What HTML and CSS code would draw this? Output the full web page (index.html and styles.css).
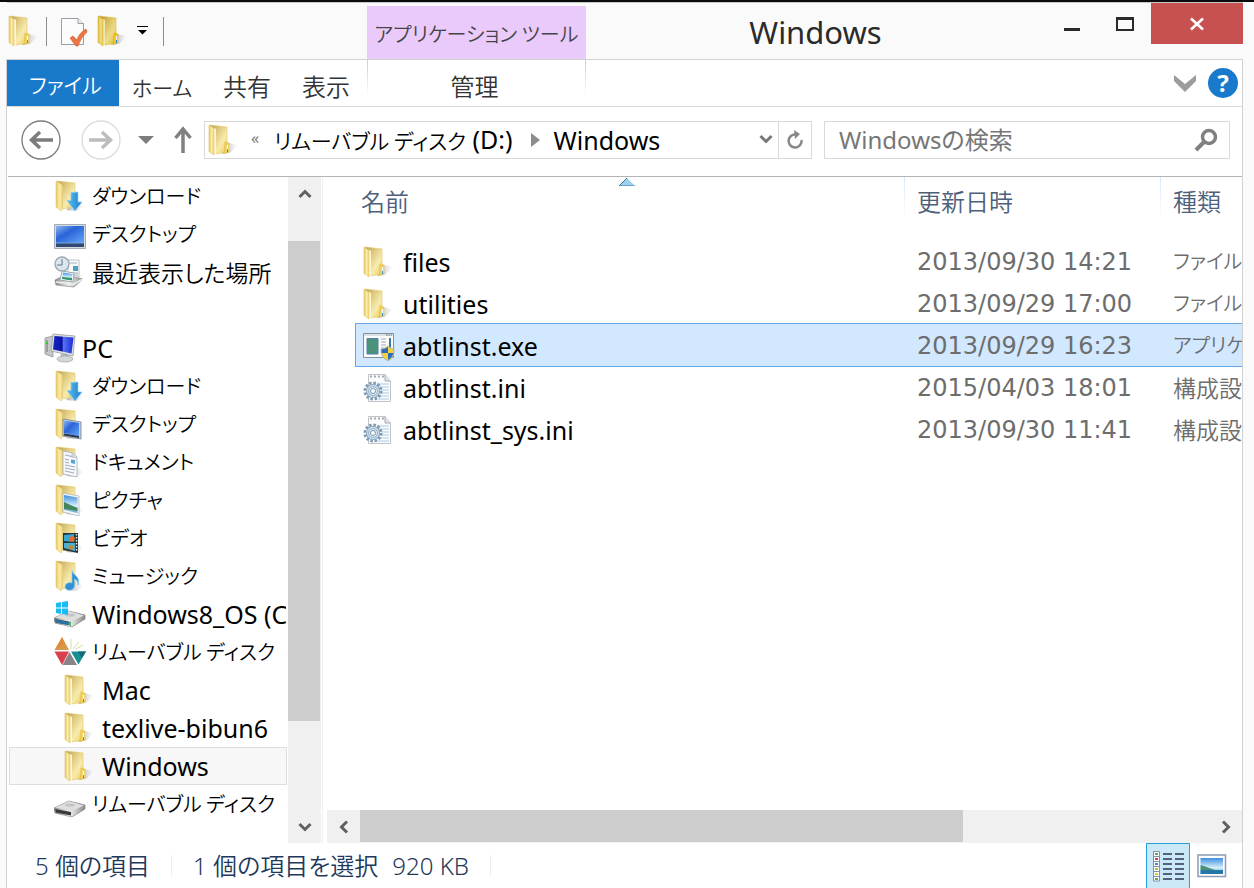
FILE: index.html
```html
<!DOCTYPE html>
<html lang="ja">
<head>
<meta charset="utf-8">
<title>Windows</title>
<link rel="stylesheet" href="styles.css">
</head>
<body>
<svg class="defs" width="0" height="0" aria-hidden="true">
  <defs>
    <linearGradient id="gBack" x1="0" x2="1" y1="0" y2="1"><stop offset="0" stop-color="#b89f58"/><stop offset=".35" stop-color="#e0cb80"/><stop offset=".65" stop-color="#f8ebae"/><stop offset="1" stop-color="#ebcb50"/></linearGradient>
    <linearGradient id="gFlap" x1="0" x2="1"><stop offset="0" stop-color="#e6c663"/><stop offset=".5" stop-color="#f9eaa4"/><stop offset="1" stop-color="#f1d87c"/></linearGradient>
    <linearGradient id="gShade" x1="0" x2="1"><stop offset="0" stop-color="#777" stop-opacity=".55"/><stop offset="1" stop-color="#999" stop-opacity="0"/></linearGradient>
    <linearGradient id="gBlue" x1="0" x2="1" y1="0" y2="1"><stop offset="0" stop-color="#8bb6ee"/><stop offset=".4" stop-color="#2a63d8"/><stop offset="1" stop-color="#63a6f7"/></linearGradient>
    <linearGradient id="gArrow" x1="0" x2="1"><stop offset="0" stop-color="#5bbdf2"/><stop offset="1" stop-color="#1c7fca"/></linearGradient>
    <linearGradient id="gSky" x1="0" x2="0" y1="0" y2="1"><stop offset="0" stop-color="#3d8fe0"/><stop offset=".6" stop-color="#d6eefa"/><stop offset="1" stop-color="#5aa7cf"/></linearGradient>
    <linearGradient id="gDisk" x1="0" x2="1"><stop offset="0" stop-color="#8d8d8d"/><stop offset=".5" stop-color="#f2f2f2"/><stop offset="1" stop-color="#8a8a8a"/></linearGradient>
    <linearGradient id="gPc" x1="0" x2="1"><stop offset="0" stop-color="#1424c4"/><stop offset=".45" stop-color="#0a14a0"/><stop offset=".5" stop-color="#5a73f0"/><stop offset="1" stop-color="#1a2ad8"/></linearGradient>
    <symbol id="folder" viewBox="0 0 32 32">
      <path d="M20 19L30 21L22 29L14 30Z" fill="url(#gShade)"/>
      <path d="M2 1L19 3V28L8 30Z" fill="url(#gBack)" stroke="#e2c766" stroke-width=".6"/>
      <path d="M17 18L21 19V28L16 29.500Z" fill="#f0d058" stroke="#dcb840" stroke-width=".5"/>
      <path d="M19.500 21V27" stroke="#fff" stroke-width="1.400"/><path d="M19.500 25V28" stroke="#3f8fd8"/>
      <path d="M6 4L8 5V29L6 30Z" fill="#fff8d6"/>
      <path d="M1 1L6 4.500V31L1 27.500Z" fill="url(#gFlap)" stroke="#e0c262" stroke-width=".6"/>
    </symbol>
    <symbol id="sfolder" viewBox="0 0 32 32">
      <path d="M22 20L30 27L22 31L12 30Z" fill="url(#gShade)"/>
      <path d="M3 1L21 3V26L9 29Z" fill="url(#gBack)" stroke="#e2c766" stroke-width=".6"/>
      <path d="M2 1L8.500 5V28L7 31L2 27Z" fill="url(#gFlap)" stroke="#dfc67a" stroke-width=".6"/>
    </symbol>
    <symbol id="dlfolder" viewBox="0 0 32 32"><use href="#sfolder"/><path d="M17 12.500L24 12V22H28L21 31L13 20.500H17Z" fill="url(#gArrow)" stroke="#8dcdf2" stroke-width=".7"/></symbol>
    <symbol id="deskfolder" viewBox="0 0 32 32"><use href="#sfolder"/><path d="M9 11L27 14V31L9 28Z" fill="#bcd0ea" stroke="#777e88" stroke-width=".8"/><path d="M10 12.500L25 15V28L10 25Z" fill="url(#gBlue)"/><path d="M10 25.500L25 28V30L10 27.500Z" fill="#25334c"/></symbol>
    <symbol id="docfolder" viewBox="0 0 32 32"><use href="#sfolder"/><path d="M9 5L19 7L23 11V31L9 28Z" fill="#f6f8fc" stroke="#a8adb6" stroke-width=".8"/><path d="M11 9L18 10.500M11 13L15 14M11 16L15 17M11 19L21 21M11 22L21 24M11 25L20 27" stroke="#8995a8" stroke-width=".8"/><path d="M17 13.500L21 14V18L17 17Z" fill="#58a5ce"/><path d="M18 7V11L23 12" fill="#d5dbe4" stroke="#999" stroke-width=".5"/></symbol>
    <symbol id="picfolder" viewBox="0 0 32 32"><use href="#sfolder"/><path d="M9 9L25 12V32L9 28Z" fill="#f4f6f9" stroke="#aab0b8" stroke-width=".7"/><path d="M10 11L23.500 13.500V29L10 26Z" fill="url(#gSky)"/><path d="M10 18Q16 21 23.500 24V27L10 25Z" fill="#43865d"/></symbol>
    <symbol id="vidfolder" viewBox="0 0 32 32"><use href="#sfolder"/><path d="M9 11L24 11V31L9 28Z" fill="#26363b"/><path d="M10 13L20 12V20L10 19Z" fill="#39a5d0"/><circle cx="18" cy="17" r="2.800" fill="#e16d28"/><path d="M10 21L21 21V29L10 26Z" fill="#48b2d5"/><path d="M14 26Q16 20 20 25L18 28Z" fill="#c48b30"/><path d="M22.500 12V30" stroke="#e6e6e6" stroke-width="1.500" stroke-dasharray="1.500 1.500"/></symbol>
    <symbol id="musfolder" viewBox="0 0 32 32"><use href="#sfolder"/><path d="M18 10C19 16 27 16 24 25C24 20 22 20 20.500 19V26C20 31 12 32 11 27C11 23 15 22 18 23Z" fill="#328fd3" stroke="#8ac9ee" stroke-width=".7"/></symbol>
    <symbol id="desktop" viewBox="0 0 32 32"><path d="M.5 6.500H31.500V30.500H.5Z" fill="#d4dae2" stroke="#a4acb8"/><path d="M2 8H30V25H2Z" fill="url(#gBlue)"/><path d="M2 25H30V29H2Z" fill="#314870"/><path d="M2 25H30" stroke="#7da6df"/></symbol>
    <symbol id="recent" viewBox="0 0 32 32"><path d="M1 24L11 19L29 23L20 31L2 29Z" fill="url(#gDisk)" stroke="#777" stroke-width=".6"/><path d="M2 26L20 28L29 23" fill="none" stroke="#eee" stroke-width="1.500"/><path d="M14 4H25V21H14Z" fill="#f8fafc" stroke="#a1a8b0" stroke-width=".7"/><path d="M15 7H23M15 17H24M15 19H24" stroke="#8d99a9" stroke-width=".8"/><path d="M19 10H24V15H19Z" fill="#4aa3bd"/><circle cx="8" cy="8" r="7" fill="#dce6ef" stroke="#9aa7b1" stroke-width="1.300"/><path d="M8 3V9H3" fill="none" stroke="#61788a"/><path d="M8 15L20 17L19 26L6 24Z" fill="#fff" stroke="#9aa"/><path d="M9 16.500L18.500 18L18 24L8 22.500Z" fill="url(#gSky)"/><path d="M8 21L18 22V24.500L8 23Z" fill="#31966b"/></symbol>
    <symbol id="pc" viewBox="0 0 32 32"><path d="M1 6L9 4V25L1 22Z" fill="#c5c8c9" stroke="#888" stroke-width=".7"/><path d="M3 8V20" stroke="#777"/><path d="M2 11H4" stroke="#2ece20" stroke-width="2"/><path d="M17 22H24L26 28H16Z" fill="#b8bcc0"/><ellipse cx="21" cy="27" rx="8" ry="3" fill="#d5d8db" stroke="#9a9fa4" stroke-width=".7"/><path d="M9 2L31 4L29 24L7 19Z" fill="#dde0e4" stroke="#8d929a" stroke-width=".7"/><path d="M10.500 4L29.500 5.500L27.500 21.500L9 17.500Z" fill="url(#gPc)"/></symbol>
    <symbol id="disk" viewBox="0 0 32 32"><path d="M0 20L15 13L31 17V21L18 29L1 25Z" fill="url(#gDisk)" stroke="#777" stroke-width=".6"/><path d="M1 19.500L15 13.500L30 17.500L18 23Z" fill="#dedede"/><ellipse cx="16" cy="17" rx="5" ry="1.500" fill="#c4c4c4"/><path d="M1 21L17 24V27.500L2 24.500Z" fill="#3a3a3a"/></symbol>
    <symbol id="osdisk" viewBox="0 0 32 32"><use href="#disk"/><path d="M2 21.500L17 24.500V27.500L2 24.500Z" fill="#2775a8"/><path d="M16 24.500V27" stroke="#43d940" stroke-width="2"/><path d="M2 5L7 4V9.500H2ZM8 4L14 3V9.500H8ZM2 10.500H7V16L2 15ZM8 10.500H14V17L8 16Z" fill="#19bcf2"/></symbol>
    <symbol id="gems" viewBox="0 0 32 32"><path d="M8 1L15 14H.5Z" fill="#d6994b"/><path d="M8 1L11 7L1 14Z" fill="#e4822d" opacity=".6"/><path d="M.5 15.500H15L8 29Z" fill="#d93f4d"/><path d="M15.500 16L23 29H8.500Z" fill="#8b8385"/><path d="M17 15.500H32L24.500 28.500Z" fill="#168f92"/><path d="M24 15.500H32L28 22Z" fill="#176a79"/><path d="M17 13L17 3M19 13L25 6M21 13.500L29 9" stroke="#cfe0a0" stroke-width="1"/></symbol>
    <symbol id="exe" viewBox="0 0 32 32"><path d="M.5 3.500H30.500V27.500H.5Z" fill="#fbfbfb" stroke="#858f99"/><path d="M1 4H30V6H1Z" fill="#d9e1e9"/><path d="M23 5H29" stroke="#596678" stroke-dasharray="1.500 1"/><path d="M4 8.500H15V24H4Z" fill="#49937a" stroke="#5180b0"/><path d="M18 9H23M18 12H23M18 15H23M18 18H22" stroke="#aaa"/><path d="M26 8H28V19H26Z" fill="#3d76a8"/><path d="M18 19Q22 19 25 16Q28 19 31 19Q32 27 25 31Q18 28 18 19Z" fill="#f4d23d" stroke="#9cacbb" stroke-width=".8"/><path d="M25 17V23H18.500V19.500Q22 19 25 17ZM25 23H30.500Q29 28 25 30Z" fill="#2e6cb9"/></symbol>
    <symbol id="ini" viewBox="0 0 32 32"><path d="M5.500 2.500H22L27.500 9V29.500H5.500Z" fill="#fafbfc" stroke="#c0c4c9"/><path d="M22 2.500V9H27.500" fill="#e1e4e8" stroke="#a5aab0"/><path d="M7 4.500H21" stroke="#a3a9af" stroke-width="2" stroke-dasharray="2 2"/><path d="M14 12H26M16 15H26M18 18H26M18 21H26M17 24H26M15 27H26" stroke="#a9cbe2"/><circle cx="10" cy="19" r="8" fill="none" stroke="#7d99b2" stroke-width="3" stroke-dasharray="2.500 1.700"/><circle cx="10" cy="19" r="5.500" fill="#dce9f3" stroke="#7895ae" stroke-width="3"/><circle cx="10" cy="19" r="5.500" fill="none" stroke="#c2d8e8" stroke-width="1.800"/><circle cx="10" cy="19" r="2.500" fill="#fff" stroke="#7895ae"/></symbol>
  </defs>
</svg>

<div class="window">
  <header class="titlebar">
    <div class="quick">
      <svg class="icon"><use href="#folder"/></svg>
      <span class="rule"></span>
      <button class="plain" aria-label="プロパティ"><svg class="icon" viewBox="0 0 32 32"><path d="M3.500 3.500H20L25.500 9V29.500H3.500Z" fill="#fcfcfd" stroke="#999ea6"/><path d="M20 3.500V8.500H25.500" fill="#e9ecf0" stroke="#999ea6"/><path d="M12 23L15 21L19 25Q21 18 28 14L29 17Q23 22 20 31H18Z" fill="#ee7440" stroke="#d95f30" stroke-width=".7"/></svg></button>
      <button class="plain newfolder" aria-label="新しいフォルダー"><svg class="icon strong"><use href="#folder"/></svg></button>
      <button class="plain more" aria-label="カスタマイズ"><svg width="12" height="12" viewBox="0 0 12 12"><path d="M0 1.500H11" stroke="#000"/><path d="M1 5H10L5.500 9.500Z"/></svg></button>
      <span class="rule"></span>
    </div>
    <div class="context kana">アプリケーション ツール</div>
    <h1 class="title">Windows</h1>
    <div class="controls">
      <button class="ctl" aria-label="最小化"><svg width="18" height="14" viewBox="0 0 18 14"><path d="M1 12.500H17" stroke="#2a2a2a" stroke-width="3"/></svg></button>
      <button class="ctl" aria-label="最大化"><svg width="18" height="14" viewBox="0 0 18 14"><path d="M1 1.500H17V13H1Z" fill="none" stroke="#2a2a2a" stroke-width="2"/><path d="M0 1.500H18" stroke="#2a2a2a" stroke-width="3"/></svg></button>
      <button class="ctl close" aria-label="閉じる"><svg width="14" height="14" viewBox="0 0 14 14"><path d="M1 1.500L13 12.500M13 1.500L1 12.500" stroke="#fff" stroke-width="2.500"/></svg></button>
    </div>
  </header>

  <div class="client">
    <nav class="tabs">
      <div class="tabgroup">
        <button class="tab file kana">ファイル</button>
        <button class="tab kana">ホーム</button>
        <button class="tab">共有</button>
        <button class="tab">表示</button>
      </div>
      <button class="tab manage">管理</button>
      <div class="tabtools">
        <button class="plain" aria-label="リボンの展開"><svg width="24" height="20" viewBox="0 0 24 20"><path d="M1 2L12 11L23 2V8L12 19L1 8Z" fill="#9c9c9c"/></svg></button>
        <button class="help" aria-label="ヘルプ">?</button>
      </div>
    </nav>

    <div class="navrow">
      <button class="round" aria-label="戻る"><svg width="40" height="40" viewBox="0 0 40 40"><circle cx="20" cy="20" r="19" fill="#fff" stroke="#7c7c7c" stroke-width="1.300"/><path d="M32 20H11M19 12L10.500 20L19 28" fill="none" stroke="#7c7c7c" stroke-width="3.500"/></svg></button>
      <button class="round" aria-label="進む"><svg width="40" height="40" viewBox="0 0 40 40"><circle cx="20" cy="20" r="19" fill="#fff" stroke="#dcdcdc" stroke-width="1.300"/><path d="M8 20H29M21 12L29.500 20L21 28" fill="none" stroke="#bcbcbc" stroke-width="3.500"/></svg></button>
      <button class="plain hist" aria-label="履歴"><svg width="16" height="10" viewBox="0 0 16 10"><path d="M0 1H16L8 9Z" fill="#7c7c7c"/></svg></button>
      <button class="plain" aria-label="上へ"><svg width="18" height="28" viewBox="0 0 18 28"><path d="M9 27V4M1.500 12L9 3L16.500 12" fill="none" stroke="#808080" stroke-width="3.500"/></svg></button>
      <div class="address">
        <svg class="icon"><use href="#folder"/></svg>
        <button class="plain chev">«</button>
        <button class="crumb"><span class="kana">リムーバブル ディスク</span> (D:)</button>
        <svg class="sep" width="9" height="14" viewBox="0 0 9 14"><path d="M0 0L9 7L0 14Z" fill="#8c8c8c"/></svg>
        <button class="crumb">Windows</button>
        <button class="plain drop" aria-label="履歴の一覧"><svg width="14" height="11" viewBox="0 0 14 11"><path d="M1.500 2L7 7.500L12.500 2" fill="none" stroke="#777" stroke-width="3"/></svg></button>
        <button class="plain refresh" aria-label="更新"><svg width="18" height="20" viewBox="0 0 18 20"><path d="M9.500 4.500A6.500 6.500 0 1 0 15.500 10" fill="none" stroke="#888" stroke-width="2.500"/><path d="M8 0L14 4L9 9Z" fill="#888"/></svg></button>
      </div>
      <div class="search">
        <input type="search" aria-label="Windowsの検索" placeholder="Windowsの検索">
        <svg width="24" height="24" viewBox="0 0 24 24"><circle cx="15" cy="9" r="6.500" fill="none" stroke="#808080" stroke-width="3.500"/><path d="M10.500 13.500L2 22" stroke="#808080" stroke-width="4"/></svg>
      </div>
    </div>

    <main class="body">
      <aside class="side">
        <ul class="tree">
          <li><button class="node kana"><svg class="icon"><use href="#dlfolder"/></svg>ダウンロード</button></li>
          <li><button class="node kana"><svg class="icon"><use href="#desktop"/></svg>デスクトップ</button></li>
          <li><button class="node kanji"><svg class="icon"><use href="#recent"/></svg>最近表示した場所</button></li>
          <li class="root"><button class="node"><svg class="icon"><use href="#pc"/></svg>PC</button></li>
          <li><button class="node kana"><svg class="icon"><use href="#dlfolder"/></svg>ダウンロード</button></li>
          <li><button class="node kana"><svg class="icon"><use href="#deskfolder"/></svg>デスクトップ</button></li>
          <li><button class="node kana"><svg class="icon"><use href="#docfolder"/></svg>ドキュメント</button></li>
          <li><button class="node kana"><svg class="icon"><use href="#picfolder"/></svg>ピクチャ</button></li>
          <li><button class="node kana"><svg class="icon"><use href="#vidfolder"/></svg>ビデオ</button></li>
          <li><button class="node kana"><svg class="icon"><use href="#musfolder"/></svg>ミュージック</button></li>
          <li><button class="node"><svg class="icon"><use href="#osdisk"/></svg>Windows8_OS (C:)</button></li>
          <li><button class="node kana"><svg class="icon"><use href="#gems"/></svg>リムーバブル ディスク</button></li>
          <li class="sub"><button class="node"><svg class="icon"><use href="#folder"/></svg>Mac</button></li>
          <li class="sub"><button class="node"><svg class="icon"><use href="#folder"/></svg>texlive-bibun6</button></li>
          <li class="sub"><button class="node current"><svg class="icon"><use href="#folder"/></svg>Windows</button></li>
          <li><button class="node kana"><svg class="icon"><use href="#disk"/></svg>リムーバブル ディスク</button></li>
        </ul>
        <div class="vbar">
          <button class="arrow" aria-label="上へスクロール"><svg width="14" height="12" viewBox="0 0 14 12"><path d="M1.500 9L7 3.500L12.500 9" fill="none" stroke="#606060" stroke-width="3"/></svg></button>
          <div class="vtrack"><div class="vthumb"></div></div>
          <button class="arrow" aria-label="下へスクロール"><svg width="14" height="12" viewBox="0 0 14 12"><path d="M1.500 3L7 8.500L12.500 3" fill="none" stroke="#606060" stroke-width="3"/></svg></button>
        </div>
      </aside>

      <section class="pane">
        <div class="list">
          <table class="files">
            <colgroup><col><col class="cdate"><col class="ctype"></colgroup>
            <thead><tr>
              <th>名前<svg class="sort" width="16" height="8" viewBox="0 0 16 8"><path d="M8 0L16 8H0Z" fill="#9bd0ee"/><path d="M8 0L0 8H16" fill="none" stroke="#3d7796"/></svg></th>
              <th>更新日時</th><th>種類</th>
            </tr></thead>
            <tbody>
              <tr><td><span class="name"><svg class="icon"><use href="#folder"/></svg>files</span></td><td class="date">2013/09/30 14:21</td><td class="kana">ファイル</td></tr>
              <tr><td><span class="name"><svg class="icon"><use href="#folder"/></svg>utilities</span></td><td class="date">2013/09/29 17:00</td><td class="kana">ファイル</td></tr>
              <tr class="selected"><td><span class="name"><svg class="icon"><use href="#exe"/></svg>abtlinst.exe</span></td><td class="date">2013/09/29 16:23</td><td class="kana">アプリケ</td></tr>
              <tr><td><span class="name"><svg class="icon"><use href="#ini"/></svg>abtlinst.ini</span></td><td class="date">2015/04/03 18:01</td><td class="kanji">構成設</td></tr>
              <tr><td><span class="name"><svg class="icon"><use href="#ini"/></svg>abtlinst_sys.ini</span></td><td class="date">2013/09/30 11:41</td><td class="kanji">構成設</td></tr>
            </tbody>
          </table>
        </div>
        <div class="hbar">
          <button class="arrow" aria-label="左へスクロール"><svg width="12" height="14" viewBox="0 0 12 14"><path d="M9 1.500L3.500 7L9 12.500" fill="none" stroke="#606060" stroke-width="3"/></svg></button>
          <div class="htrack"><div class="hthumb"></div></div>
          <button class="arrow" aria-label="右へスクロール"><svg width="12" height="14" viewBox="0 0 12 14"><path d="M3 1.500L8.500 7L3 12.500" fill="none" stroke="#606060" stroke-width="3"/></svg></button>
        </div>
      </section>
    </main>

    <footer class="status">
      <span class="count">5 個の項目</span>
      <span class="picked">1 個の項目を選択</span>
      <span class="size">920 KB</span>
      <div class="views">
        <button class="view on" aria-label="詳細"><svg width="32" height="32" viewBox="0 0 32 32"><path d="M1.500 1.500H7.500V31H1.500Z" fill="#fff" stroke="#8490a8"/><path d="M1.500 6.500H7.500M1.500 11.500H7.500M1.500 16.500H7.500M1.500 21.500H7.500M1.500 26.500H7.500" stroke="#8490a8"/><path d="M3 3H6V5H3ZM3 28H6V30H3Z" fill="#64a060"/><path d="M3 8H6V10H3Z" fill="#e04030"/><path d="M3 13H6V15H3Z" fill="#4a80e0"/><path d="M3 18H6V20H3Z" fill="#a3c52f"/><path d="M3 23H6V25H3Z" fill="#dfd020"/><path d="M11 4H20M23 4H32M11 9H20M23 9H32M11 14H20M23 14H32M11 19H20M23 19H32M11 24H20M23 24H32M11 29H20M23 29H32" stroke="#53627c" stroke-width="2"/></svg></button>
        <button class="view" aria-label="大アイコン"><svg width="30" height="24" viewBox="0 0 30 24"><path d="M1 1H28.500V22.500H1Z" fill="#fff" stroke="#8d9bb5" stroke-width="1.500"/><path d="M3.500 4H26V20H3.500Z" fill="url(#gSky)"/><path d="M3.500 11Q10 13 18 16H3.500Z" fill="#4a9173"/><path d="M3.500 16H26V20H3.500Z" fill="#2477a6"/></svg></button>
      </div>
    </footer>
  </div>
</div>
</body>
</html>
```
FILE: styles.css
```css
* { box-sizing: border-box; }
body {
  margin: 0;
  font-family: "Noto Sans", "Noto Sans CJK JP", sans-serif;
  font-size: 24px;
  line-height: 32px;
  font-feature-settings: "palt";
  color: #000;
}
button { margin: 0; padding: 0; border: 0; background: none; font: inherit; font-feature-settings: inherit; color: inherit; text-align: left; white-space: nowrap; }
svg { display: block; flex: none; }
.defs { position: absolute; }
.icon { width: 32px; height: 32px; }
.strong { filter: saturate(1.4) brightness(.93); }
.kana { font-family: "Noto Sans CJK JP", sans-serif; font-size: 20px; font-weight: 350; }
.kanji { font-family: "Noto Sans CJK JP", sans-serif; font-size: 23px; font-weight: 350; }
.plain { display: flex; align-items: center; justify-content: center; }

.window {
  display: flex; flex-direction: column;
  height: 100vh; min-height: 880px;
  padding: 0 11px 0 6px;
  background: #fafafa;
  border-top: 2px solid #0b0b0d;
  overflow: hidden;
}
.titlebar { display: flex; height: 57px; flex: none; margin: 0 0 0 1px; border-top: 1px solid #c8c8c8; }
.quick { display: flex; align-items: center; width: 360px; flex: none; padding-left: 1px; }
.quick .rule { width: 1px; height: 29px; background: #8c8c8c; }
.quick .rule:nth-child(2) { margin: 0 11px 0 6px; }
.newfolder { margin-left: 7px; }
.more { width: 28px; margin-right: 6px; }
.context { width: 219px; flex: none; margin-top: 3px; padding-top: 12px; background: #eac9fb; color: #444; text-align: center; white-space: nowrap; }
.title { flex: 1; margin: 0; padding-top: 9px; font-size: 31px; line-height: 40px; font-weight: 400; text-align: center; color: #2a2a2a; }
.controls { display: flex; }
.ctl { display: flex; align-items: center; justify-content: center; width: 53px; height: 41px; }
.close { width: 92px; background: #c75050; }

.client { flex: 1; min-height: 0; display: flex; flex-direction: column; border: 1px solid #d2d2d2; border-bottom: 0; background: #fff; }
.tabs { display: flex; height: 47px; flex: none; border-bottom: 1px solid #dadada; }
.tabgroup { display: flex; gap: 31px; width: 360px; }
.tab { padding-top: 8px; color: #333; font-weight: 350; }
.file { width: 112px; padding: 2px 0 0 22px; margin-right: -18px; background: #1979ca; color: #fff; }
.manage { width: 219px; padding-right: 4px; text-align: center; border: solid; border-width: 0 1px; border-image: linear-gradient(#ccc, #fff 36px) 1; }
.tabtools { flex: 1; display: flex; justify-content: flex-end; align-items: center; gap: 11px; padding-right: 4px; }
.help { width: 30px; height: 30px; border-radius: 50%; background: #1979ca; color: #fff; font-weight: 700; line-height: 30px; text-align: center; }
.tabs .kana { font-size: 21px; }

.navrow { display: flex; align-items: center; height: 69px; flex: none; padding: 0 12px 4px 14px; }
.round { width: 40px; margin-right: 20px; }
.hist { margin: 0 20px 0 -3px; }
.address, .search { display: flex; align-items: center; height: 38px; border: 1px solid #d9d9d9; background: #fff; }
.address { flex: 1; min-width: 0; margin: 0 12px; padding-left: 3px; }
.chev { width: 30px; margin-right: 4px; padding-bottom: 4px; font-size: 16px; color: #777; }
.crumb { font-size: 25px; }
.crumb .kana { font-size: 21px; }
.sep { margin: 0 14px 0 18px; }
.drop { flex: 1; justify-content: flex-end; margin-right: 5px; }
.refresh { width: 33px; height: 36px; border-left: 1px solid #d9d9d9; }
.search { flex: 0 1 406px; min-width: 0; padding: 0 11px 0 14px; }
.search input { flex: 1; min-width: 0; padding: 0; border: 0; outline: 0; background: none; font: inherit; }
.search input::placeholder { color: #767676; opacity: 1; }

.body { flex: 1; min-height: 0; display: flex; border-top: 1px solid #b4b4b4; margin: 0 0 0 1px; }
.side { display: flex; width: 315px; flex: none; border-right: 1px solid #f0f0f0; }
.tree { flex: 1; min-width: 0; margin: 0; padding: 0 1px; list-style: none; overflow: hidden; }
.node { display: flex; align-items: center; gap: 6px; width: 100%; height: 38px; padding-left: 44px; overflow: hidden; border: 1px solid transparent; font-size: 25px; }
.node.kana { font-size: 20px; }
.node.kanji { font-size: 23px; }
.root { margin-top: 38px; }
.root .node { padding-left: 34px; }
.sub .node { padding-left: 54px; }
.current { background: #f7f7f7; border-color: #dedede; }
.vbar { display: flex; flex-direction: column; width: 33px; margin-right: 1px; background: #f0f0f0; }
.arrow { display: flex; align-items: center; justify-content: center; width: 33px; height: 33px; }
.vtrack { flex: 1; }
.vthumb { width: 32px; height: 80%; margin-top: 31px; background: #cdcdcd; }

.pane { flex: 1; min-width: 0; display: flex; flex-direction: column; padding-left: 4px; }
.list { flex: 1; min-height: 0; padding-left: 29px; overflow: hidden; }
.files { width: 100%; table-layout: fixed; border-collapse: collapse; }
.cdate { width: 256px; }
.ctype { width: 82px; }
.files th { position: relative; height: 63px; padding: 9px 0 0 13px; vertical-align: top; text-align: left; font-weight: 350; color: #4c607a; background: linear-gradient(#d9e8f7, #fff) no-repeat 0 0 / 1px 45px; }
.files th:first-child { padding-left: 5px; background: none; }
.sort { position: absolute; top: 1px; left: calc(50% - 11px); }
.files td { height: 42px; padding: 2px 0 0 13px; color: #6d6d6d; white-space: nowrap; overflow: hidden; }
.files td:first-child { padding-left: 7px; color: #000; font-size: 25px; }
.files td.kana, .files td.kanji { padding-top: 0; }
.name { display: flex; align-items: center; gap: 8px; }
.files .date { font-family: "DejaVu Sans", sans-serif; }
.selected { background: #d1e8ff; outline: 1px solid #66a7e8; }
.hbar { display: flex; height: 33px; flex: none; background: #f0f0f0; }
.htrack { flex: 1; }
.hthumb { width: 71%; height: 32px; background: #cdcdcd; }

.status { display: flex; align-items: center; height: 45px; flex: none; padding-left: 28px; color: #1e395b; font-weight: 350; }
.count { padding-right: 21px; border-right: 1px solid #eee; line-height: 22px; }
.picked { padding: 0 14px 0 21px; }
.size { padding-right: 21px; border-right: 1px solid #eee; line-height: 22px; }
.views { display: flex; align-items: center; margin-left: auto; padding-right: 8px; align-self: stretch; }
.view { display: flex; align-items: center; justify-content: center; width: 44px; height: 100%; }
.on { background: #cbe8f6; border: 1px solid #26a0da; border-bottom: 0; }
```
